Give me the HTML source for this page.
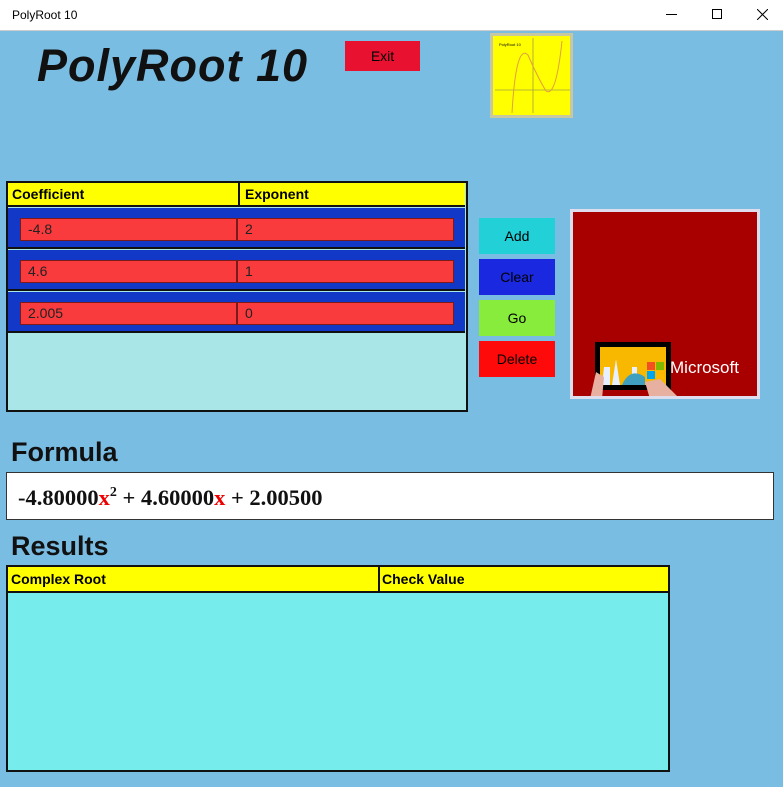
<!DOCTYPE html>
<html><head><style>
*{margin:0;padding:0;box-sizing:border-box}
body{width:783px;height:787px;background:#7abde2;font-family:"Liberation Sans",sans-serif;position:relative;overflow:hidden}
.a{position:absolute}
.tb{left:0;top:0;width:783px;height:31px;background:#fff;border-bottom:1px solid #ccc;font-size:12px}
.btn{position:absolute;left:479px;width:76px;height:36px;font-size:14px;text-align:center;line-height:36px}
.row{position:absolute;left:8px;width:457px;background:#1238c8}
.tx{position:absolute;top:10px;height:23px;background:#f93b3e;border:1px solid #7a1a1a;font-size:14px;line-height:21px;padding-left:7px;color:#222}
</style></head><body>
<div class="a tb">
<span class="a" style="left:12px;top:8px">PolyRoot 10</span>
<span class="a" style="left:666px;top:14px;width:11px;height:1px;background:#000"></span>
<span class="a" style="left:712px;top:9px;width:10px;height:10px;border:1px solid #000"></span>
<svg class="a" style="left:757px;top:9px" width="11" height="11"><path d="M0 0L11 11M11 0L0 11" stroke="#000" stroke-width="1"/></svg>
</div>
<div class="a" style="left:37px;top:40px;font-size:45px;font-weight:bold;font-style:italic;color:#111;letter-spacing:1px">PolyRoot 10</div>
<div class="a" style="left:345px;top:41px;width:75px;height:30px;background:#e81130;text-align:center;line-height:30px;font-size:14px">Exit</div>
<svg class="a" style="left:490px;top:33px" width="83" height="85" viewBox="0 0 83 85">
<rect width="83" height="85" fill="#c8c8a0"/><rect x="3" y="3" width="77" height="79" fill="#ffff00"/>
<line x1="43" y1="5" x2="43" y2="80" stroke="#a0a040" stroke-width="0.8"/>
<line x1="5" y1="57" x2="80" y2="57" stroke="#a0a040" stroke-width="0.8"/>
<path d="M22 80 Q26 10 38 22 Q48 45 56 58 Q66 65 72 8" fill="none" stroke="#e0a040" stroke-width="1"/>
<text x="9" y="13" font-size="4" font-family="Liberation Sans">PolyRoot 10</text>
</svg>
<div class="a" style="left:6px;top:181px;width:462px;height:231px;border:2px solid #111;background:#a8e6e8"></div>
<div class="a" style="left:8px;top:183px;width:457px;height:24px;background:#ff0;border-bottom:2px solid #111;font-weight:bold;font-size:14px">
<span class="a" style="left:4px;top:3px">Coefficient</span>
<span class="a" style="left:230px;top:0;width:2px;height:24px;background:#111"></span>
<span class="a" style="left:237px;top:3px">Exponent</span></div>
<div class="row" style="top:208px;height:41px;border-bottom:2px solid #111"><div class="tx" style="left:12px;width:217px">-4.8</div><div class="tx" style="left:229px;width:217px">2</div></div>
<div class="row" style="top:250px;height:41px;border-bottom:2px solid #111"><div class="tx" style="left:12px;width:217px">4.6</div><div class="tx" style="left:229px;width:217px">1</div></div>
<div class="row" style="top:292px;height:41px;border-bottom:2px solid #111"><div class="tx" style="left:12px;width:217px">2.005</div><div class="tx" style="left:229px;width:217px">0</div></div>
<div class="btn" style="top:218px;background:#22d0d8">Add</div>
<div class="btn" style="top:259px;background:#1a28e0">Clear</div>
<div class="btn" style="top:300px;background:#88ec3c">Go</div>
<div class="btn" style="top:341px;background:#ff0a0a">Delete</div>
<div class="a" style="left:570px;top:209px;width:190px;height:190px;border:3px solid #dde;background:#a80000;overflow:hidden">
<svg class="a" style="left:17px;top:125px" width="90" height="62" viewBox="0 0 90 62">
<rect x="5" y="5" width="76" height="48" fill="#000"/><rect x="10" y="10" width="66" height="38" fill="#f8b800"/>
<path d="M22 48 L26 22 L30 48Z M12 48 L14 30 L20 30 L20 48Z M42 30 h5 v18 h-5Z" fill="#e8f0ff"/>
<path d="M32 48 Q40 30 55 40 L55 48Z" fill="#40a0c0"/>
<rect x="57" y="25" width="8" height="8" fill="#f25022"/><rect x="66" y="25" width="8" height="8" fill="#7fba00"/>
<rect x="57" y="34" width="8" height="8" fill="#00a4ef"/><rect x="66" y="34" width="8" height="8" fill="#ffb900"/>
<path d="M0 62 L6 35 L14 40 L12 62Z M55 45 L70 42 L90 62 L60 62Z" fill="#e8b0a0"/>
</svg>
<div class="a" style="left:97px;top:146px;color:#fff;font-size:17px">Microsoft</div>
</div>
<div class="a" style="left:11px;top:437px;font-size:27px;font-weight:bold;color:#111">Formula</div>
<div class="a" style="left:6px;top:472px;width:768px;height:48px;background:#fff;border:1px solid #333;font-family:'Liberation Serif',serif;font-weight:bold;font-size:22.5px;padding:12px 0 0 11px;color:#111">-4.80000<span style="color:#e00">x</span><sup style="font-size:14px;vertical-align:9px">2</sup> + 4.60000<span style="color:#e00">x</span> + 2.00500</div>
<div class="a" style="left:11px;top:531px;font-size:27px;font-weight:bold;color:#111">Results</div>
<div class="a" style="left:6px;top:565px;width:664px;height:207px;border:2px solid #111;background:#76ecec"></div>
<div class="a" style="left:8px;top:567px;width:660px;height:26px;background:#ff0;border-bottom:2px solid #111;font-weight:bold;font-size:14px">
<span class="a" style="left:3px;top:4px">Complex Root</span>
<span class="a" style="left:370px;top:0;width:2px;height:26px;background:#111"></span>
<span class="a" style="left:374px;top:4px">Check Value</span></div>
</body></html>
